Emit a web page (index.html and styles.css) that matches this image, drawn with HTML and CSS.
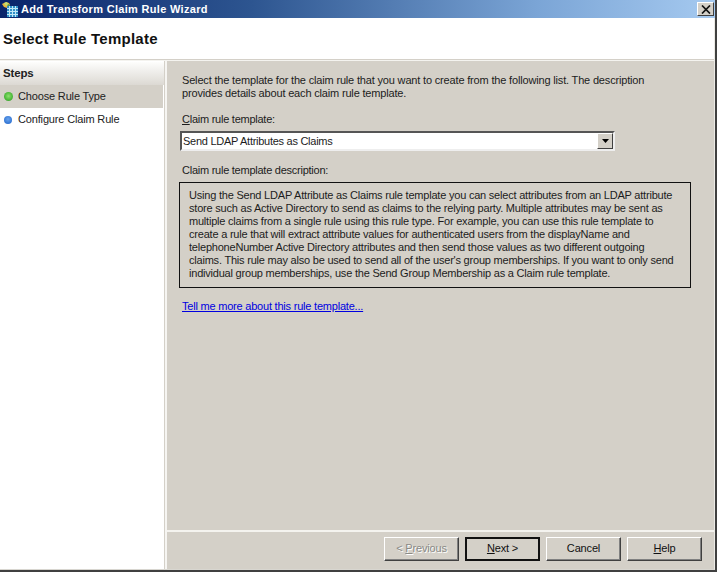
FILE: index.html
```html
<!DOCTYPE html>
<html lang="en">
<head>
<meta charset="utf-8">
<title>Add Transform Claim Rule Wizard</title>
<link rel="stylesheet" href="styles.css">
</head>
<body>
<div class="window">
  <div class="titlebar">
    <svg class="app-icon" viewBox="0 0 16 16" width="16" height="16" aria-hidden="true">
      <path d="M0 3l4-2 3 1 1 2-3 3-3-1z" fill="#e9b93c"/>
      <path d="M2 2l3-1 1 2-2 2z" fill="#bfe07a"/>
      <path d="M6 3l2 1-2 3-1-1z" fill="#3f9a57"/>
      <rect x="5" y="5" width="11" height="11" fill="#2f8fc8"/>
      <path d="M7.500 5v11M10.500 5v11M13.500 5v11M5 7.500h11M5 10.500h11M5 13.500h11" stroke="#bfe8f6" stroke-width="1"/>
    </svg>
    <span class="title-text">Add Transform Claim Rule Wizard</span>
    <button class="close-btn" type="button" aria-label="Close">
      <svg viewBox="0 0 10 9" width="10" height="9" aria-hidden="true"><path d="M1 0.500l8 8M9 0.500l-8 8" stroke="#111" stroke-width="1.700"/></svg>
    </button>
  </div>
  <header class="page-header"><h1>Select Rule Template</h1></header>
  <div class="main">
    <aside class="steps">
      <div class="steps-head">Steps</div>
      <div class="step step-active"><span class="dot dot-green"></span>Choose Rule Type</div>
      <div class="step"><span class="dot dot-blue"></span>Configure Claim Rule</div>
    </aside>
    <section class="pane">
      <div class="content">
        <p class="intro">Select the template for the claim rule that you want to create from the following list. The description<br>provides details about each claim rule template.</p>
        <label class="label"><u>C</u>laim rule template:</label>
        <div class="select">
          <span class="select-value">Send LDAP Attributes as Claims</span>
          <span class="select-arrow"><svg viewBox="0 0 7 4" width="7" height="4" aria-hidden="true"><path d="M0 0h7L3.500 4z" fill="#000"/></svg></span>
        </div>
        <div class="label desc-label">Claim rule template description:</div>
        <div class="desc">Using the Send LDAP Attribute as Claims rule template you can select attributes from an LDAP attribute<br>store such as Active Directory to send as claims to the relying party. Multiple attributes may be sent as<br>multiple claims from a single rule using this rule type. For example, you can use this rule template to<br>create a rule that will extract attribute values for authenticated users from the displayName and<br>telephoneNumber Active Directory attributes and then send those values as two different outgoing<br>claims. This rule may also be used to send all of the user's group memberships. If you want to only send<br>individual group memberships, use the Send Group Membership as a Claim rule template.</div>
        <a class="more" href="#">Tell me more about this rule template...</a>
      </div>
      <footer class="footer">
        <button class="btn" type="button" disabled>&lt; <u>P</u>revious</button>
        <button class="btn btn-default" type="button"><u>N</u>ext &gt;</button>
        <button class="btn" type="button">Cancel</button>
        <button class="btn" type="button"><u>H</u>elp</button>
      </footer>
    </section>
  </div>
</div>
</body>
</html>
```
FILE: styles.css
```css
* { box-sizing: border-box; }
html, body { margin: 0; height: 100%; }
body {
  font-family: "Liberation Sans", Arial, sans-serif;
  font-size: 11px;
  letter-spacing: -0.16px;
  color: #1c1c1c;
  overflow: hidden;
}
.window {
  width: 717px;
  height: 572px;
  display: flex;
  flex-direction: column;
  background: #d4d0c8;
  border-right: 3px solid #ecebe6;
  border-bottom: 3px solid #d8d6d0;
  position: relative;
}
.window::after {
  content: "";
  position: absolute;
  right: -3px;
  bottom: -3px;
  width: 717px;
  height: 572px;
  border-right: 2px solid #404040;
  border-bottom: 2px solid #404040;
  pointer-events: none;
}
.titlebar {
  height: 18px;
  flex: none;
  margin-right: -3px;
  display: flex;
  align-items: center;
  padding: 0 3px 0 2px;
  background: linear-gradient(90deg, #0a246a 0%, #2d5590 35%, #7ba5d6 75%, #a6caf0 100%);
}
.app-icon { flex: none; margin-right: 3px; }
.title-text {
  color: #fff;
  font-weight: 700;
  font-size: 11px;
  flex: 1;
  letter-spacing: 0.31px;
}
.close-btn {
  width: 17px;
  height: 14px;
  padding: 0;
  display: flex;
  align-items: center;
  justify-content: center;
  background: #d4d0c8;
  border: 1px solid;
  border-color: #fff #404040 #404040 #fff;
}
.page-header {
  height: 42px;
  flex: none;
  background: #fff;
  border-bottom: 1px solid #d4d0c8;
  box-shadow: 0 1px 0 #f4f3ef;
  display: flex;
  align-items: center;
  padding: 0 3px 1px;
  position: relative;
}
.page-header h1 {
  margin: 0;
  font-size: 15px;
  font-weight: 700;
  color: #111;
  letter-spacing: 0.25px;
}
.main { flex: 1; min-height: 0; display: flex; background: #d4d0c8; }
.steps {
  width: 165px;
  flex: none;
  background: #fff;
  border-right: 1px solid #d4d0c8;
  padding: 2px 0 0 0;
}
.steps-head {
  height: 23px;
  background: linear-gradient(180deg, #fdfdfc 0%, #dcd9d3 100%);
  font-weight: 700;
  font-size: 11.500px;
  padding: 5px 3px 0;
  color: #222;
}
.step {
  height: 23px;
  margin-right: 1px;
  display: flex;
  align-items: center;
  color: #222;
  padding: 0 0 2px 4px;
}
.step-active { background: #d4d0c8; }
.dot {
  width: 8px;
  height: 8px;
  border-radius: 50%;
  margin: 2px 6px 0 0;
  flex: none;
}
.dot-green {
  width: 9px;
  height: 9px;
  margin-right: 5px;
  background: radial-gradient(circle at 50% 45%, #8fe070 0%, #4fbc3c 55%, #2a8a2a 100%);
}
.dot-blue { background: radial-gradient(circle at 50% 40%, #6aa4ee, #1c62c8); }
.pane {
  flex: 1;
  min-width: 0;
  border-left: 2px solid #f6f5f2;
  display: flex;
  flex-direction: column;
}
.content { flex: 1; padding: 14px 0 0 12px; }
.intro { margin: 0 0 0 3px; line-height: 13px; letter-spacing: -0.17px; }
.label { display: block; margin-top: 12px; line-height: 14px; padding-left: 3px; letter-spacing: -0.25px; }
.select {
  width: 435px;
  height: 20px;
  margin-top: 5px;
  margin-left: 1px;
  background: #fff;
  border: 2px solid;
  border-color: #555 #eee #eee #555;
  display: flex;
  align-items: center;
  justify-content: space-between;
}
.select-value { padding-left: 1px; letter-spacing: -0.27px; }
.select-arrow {
  width: 16px;
  height: 16px;
  background: #d4d0c8;
  border: 1px solid;
  border-color: #fff #404040 #404040 #fff;
  display: flex;
  align-items: center;
  justify-content: center;
}
.desc-label { margin-top: 12px; }
.desc {
  width: 512px;
  height: 106px;
  margin-top: 5px;
  border: 1px solid #111;
  padding: 6px 0 0 9px;
  line-height: 13px;
  letter-spacing: -0.21px;
}
.more {
  display: inline-block;
  margin-top: 12px;
  margin-left: 3px;
  color: #0000e0;
  letter-spacing: -0.21px;
}
.footer {
  height: 39px;
  flex: none;
  border-top: 2px solid #f4f3ef;
  display: flex;
  gap: 6px;
  justify-content: flex-end;
  padding: 5px 12px 0 0;
}
.btn {
  width: 75px;
  height: 24px;
  padding: 0 0 3px;
  font: inherit;
  letter-spacing: inherit;
  color: #111;
  background: #d4d0c8;
  border: 1px solid;
  border-color: #fff #404040 #404040 #fff;
  box-shadow: inset -1px -1px 0 #808080;
}
.btn:disabled { color: #8a8a86; text-shadow: 1px 1px 0 #fff; }
.btn-default { border: 2px solid #111; box-shadow: none; }
```
